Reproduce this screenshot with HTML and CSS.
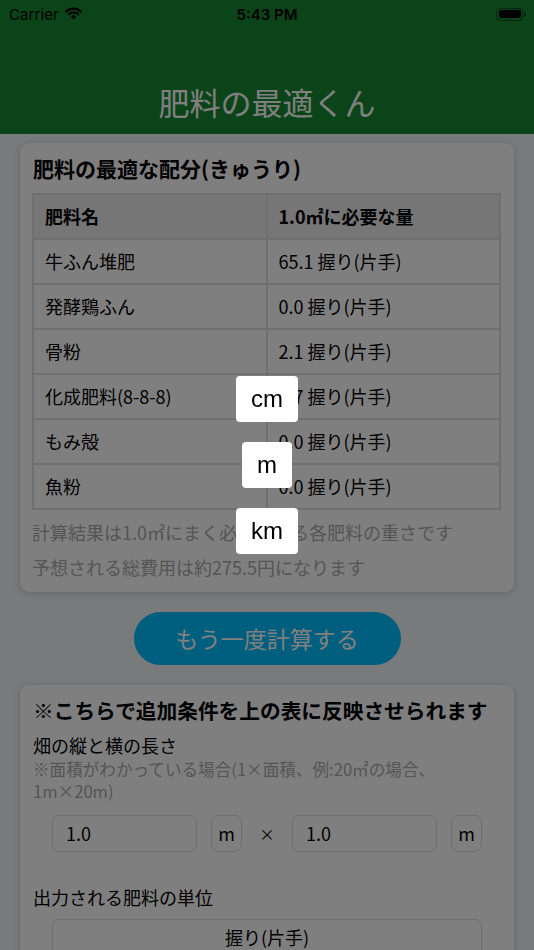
FILE: index.html
```html
<!DOCTYPE html>
<html lang="ja">
<head>
  <meta charset="UTF-8">
  <title>肥料の最適くん</title>
  <link rel="stylesheet" href="styles.css">
</head>
<body>

<header class="topbar">
  <div class="status">
    <span class="carrier">Carrier
      <svg class="wifi" width="17" height="13" viewBox="0 0 17 13">
        <path d="M1.2 4.6A10.5 10.5 0 0 1 15.8 4.6" fill="none" stroke="#000" stroke-width="2.2" stroke-linecap="round"/>
        <path d="M3.8 7.3A6.7 6.7 0 0 1 13.2 7.3" fill="none" stroke="#000" stroke-width="2.2" stroke-linecap="round"/>
        <path d="M8.5 12.4L5.9 9.6A3.7 3.7 0 0 1 11.1 9.6Z" fill="#000"/>
      </svg>
    </span>
    <span class="clock">5:43 PM</span>
    <span class="battery"><i></i></span>
  </div>
  <h1 class="app-title">肥料の最適くん</h1>
</header>

<main class="content">
  <section class="card">
    <h2 class="card-title">肥料の最適な配分(きゅうり)</h2>
    <table class="mix">
      <tr><th>肥料名</th><th>1.0㎡に必要な量</th></tr>
      <tr><td>牛ふん堆肥</td><td>65.1 握り(片手)</td></tr>
      <tr><td>発酵鶏ふん</td><td>0.0 握り(片手)</td></tr>
      <tr><td>骨粉</td><td>2.1 握り(片手)</td></tr>
      <tr><td>化成肥料(8-8-8)</td><td>0.7 握り(片手)</td></tr>
      <tr><td>もみ殻</td><td>0.0 握り(片手)</td></tr>
      <tr><td>魚粉</td><td>0.0 握り(片手)</td></tr>
    </table>
    <p class="note first">計算結果は1.0㎡にまく必要がある各肥料の重さです</p>
    <p class="note">予想される総費用は約275.5円になります</p>
  </section>

  <div class="actions">
    <button class="again">もう一度計算する</button>
  </div>

  <section class="card">
    <h2 class="card-title wide">※こちらで追加条件を上の表に反映させられます</h2>
    <p class="label">畑の縦と横の長さ</p>
    <p class="hint">※面積がわかっている場合(1×面積、例:20㎡の場合、1m×20m)</p>
    <div class="size-row">
      <div class="field">1.0</div>
      <div class="unit">m</div>
      <span class="times">×</span>
      <div class="field">1.0</div>
      <div class="unit">m</div>
    </div>
    <p class="label output">出力される肥料の単位</p>
    <div class="select">握り(片手)</div>
  </section>
</main>

<div class="overlay"></div>
<div class="picker">
  <div class="opt">cm</div>
  <div class="opt">m</div>
  <div class="opt">km</div>
</div>

</body>
</html>
```

FILE: styles.css
```css
* { box-sizing: border-box; }
html, body { margin:0; padding:0; }
body { width:534px; height:950px; overflow:hidden; background:#f2f4f6; font-family:"Noto Sans CJK JP", "Noto Sans", sans-serif; color:#000; }

.topbar { height:134px; background:#168830; }
.status { height:28px; display:flex; align-items:center; justify-content:space-between; padding:0 11px 0 9px; font-family:Inter, Roboto, sans-serif; font-size:15px; position:relative; }
.carrier { display:flex; align-items:center; gap:6px; letter-spacing:.1px; }
.wifi { margin-top:-1px; }
.clock { position:absolute; left:0; right:0; text-align:center; font-weight:600; pointer-events:none; }
.battery { width:27px; height:13px; border:1px solid rgba(0,0,0,.45); border-radius:4px; padding:1.5px; position:relative; }
.battery i { display:block; width:100%; height:100%; background:#000; border-radius:2px; }
.battery::after { content:""; position:absolute; right:-4px; top:3.5px; width:2px; height:5px; background:rgba(0,0,0,.45); border-radius:0 2px 2px 0; }
.app-title { margin:0; padding-top:54px; line-height:40px; text-align:center; font-size:31px; font-weight:400; color:#fff; }

.content { padding:9px 20px 0; }
.card { background:#fff; border-radius:9px; box-shadow:0 1px 6px rgba(0,0,0,.18); padding:11px 13px 7px 12px; }
.card-title { margin:0 0 0 1px; font-size:21px; line-height:28px; font-weight:700; }
.card-title.wide { font-size:20.7px; }

.mix { width:100%; margin-top:11px; border-collapse:collapse; font-size:18px; }
.mix th, .mix td { width:50%; height:45px; border:2px solid #dedede; text-align:left; padding:0 0 1px 11px; }
.mix th { background:#ececec; font-weight:700; }

.note { margin:0; font-size:18px; line-height:35px; color:#aaa; }
.note.first { margin-top:5px; }

.actions { display:flex; justify-content:center; padding:20px 0; }
.again { width:267px; height:53px; border:0; border-radius:27px; background:#00bfff; color:#fff; font-family:inherit; font-size:23px; padding-bottom:2px; }

.label { margin:9px 0 0 1px; font-size:18px; line-height:24px; }
.hint { margin:1px 0 0 1px; font-size:16.6px; line-height:22px; color:#aaa; }
.size-row { display:grid; grid-template-columns:145px 31px 22px 145px 31px; column-gap:14px; align-items:center; margin:13px 0 0 20px; }
.field, .unit { height:37px; border:1px solid #dcdcdc; border-radius:7px; font-size:18px; line-height:35px; }
.field { padding-left:13px; }
.unit { text-align:center; }
.times { text-align:center; font-size:15px; }
.label.output { margin-top:33px; }
.select { margin:10px 0 0 20px; width:430px; height:40px; border:1px solid #dcdcdc; border-radius:7px; text-align:center; font-size:18px; line-height:34px; }

.overlay { position:fixed; top:0; left:0; width:100%; height:100%; background:rgba(0,0,0,.5); }
.picker { position:fixed; top:376px; left:0; width:534px; display:flex; flex-direction:column; align-items:center; gap:20px; }
.opt { height:46px; padding:0 15px; background:#fff; border-radius:4px; font-family:"Liberation Sans", Arial, sans-serif; font-size:24px; line-height:46px; color:#000; }
```
